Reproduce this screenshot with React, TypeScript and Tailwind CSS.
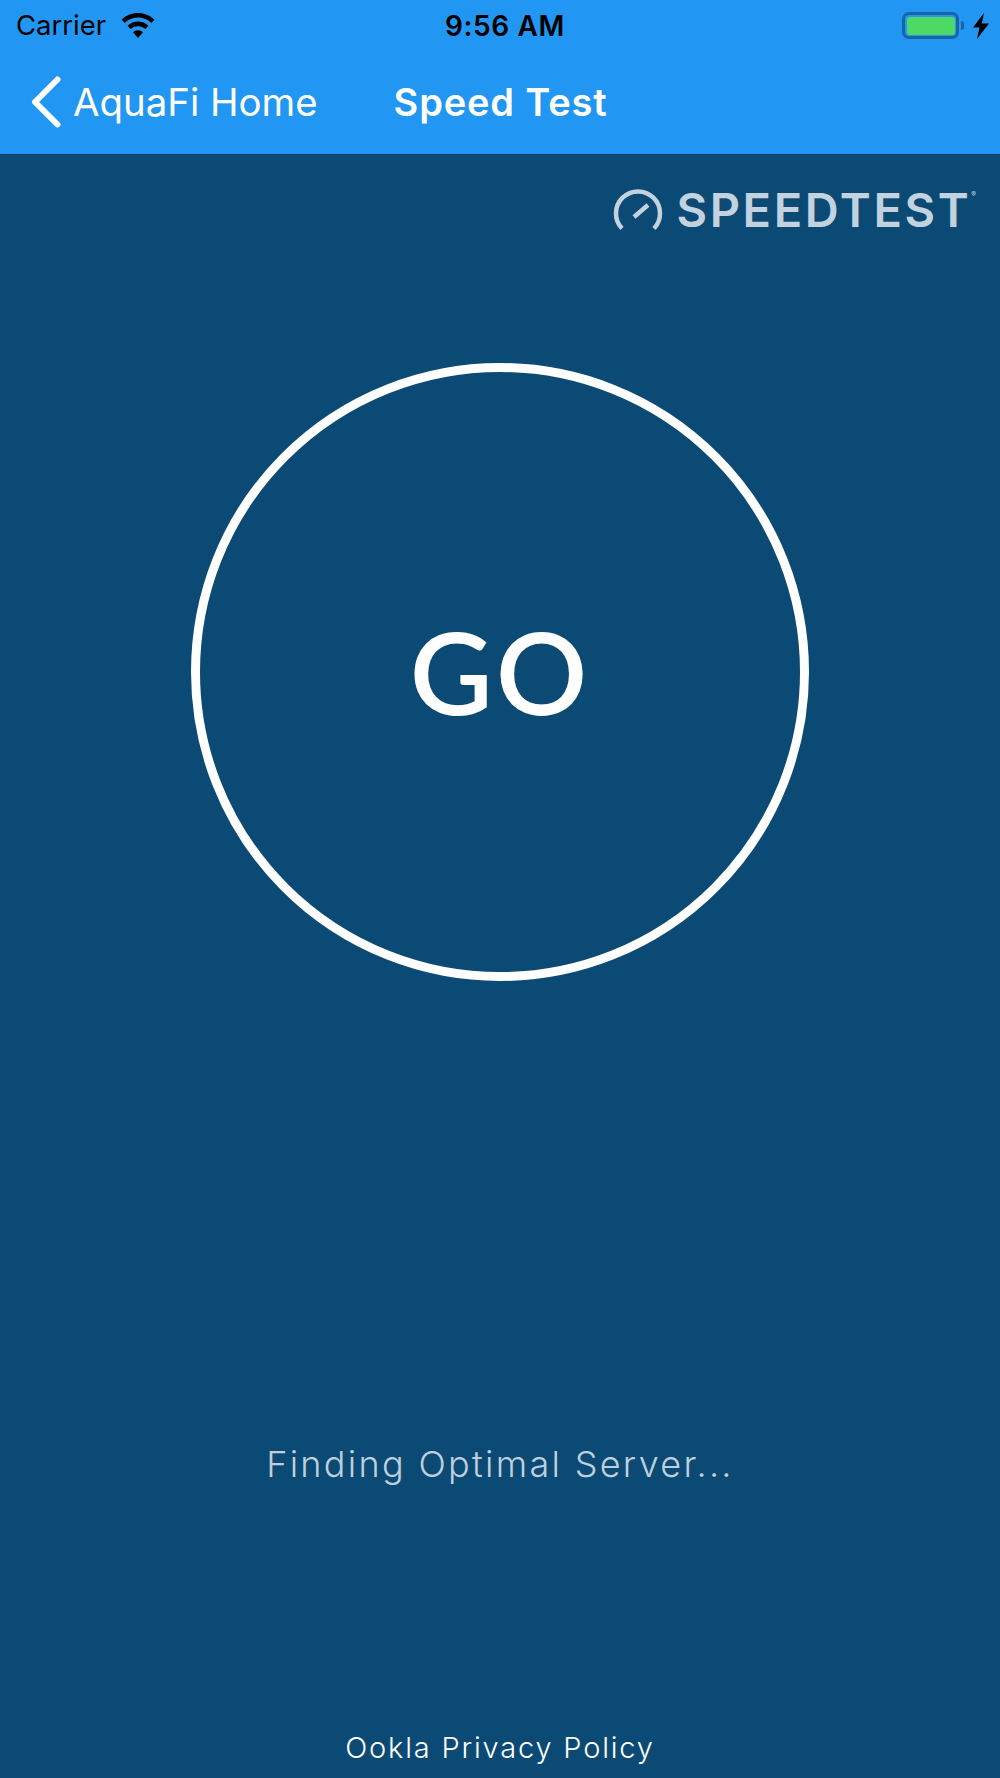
const sysFont = "font-['Inter','Liberation_Sans',sans-serif]";
const brandFont = "font-['Lato','Open_Sans',sans-serif]";

function Wifi() {
  return (
    <svg viewBox="0 0 34 25" className="h-[25px] w-[34px]" fill="currentColor" aria-hidden="true">
      <path d="M17 0C10.6 0 5 2.5 .6 6.6l3 3.4C7.2 6.6 11.8 4.6 17 4.6s9.8 2 13.4 5.4l3-3.4C29 2.5 23.4 0 17 0z" />
      <path d="M17 8.6c-4 0-7.7 1.6-10.4 4.1l3 3.4C11.500 14.300 14.100 13.200 17 13.200s5.500 1.100 7.400 2.900l3-3.400C24.700 10.200 21 8.600 17 8.600z" />
      <path d="M17 17.300c-2 0-3.700.8-5 2l5 5.700 5-5.700c-1.300-1.200-3-2-5-2z" />
    </svg>
  );
}

function Battery() {
  return (
    <div className="flex items-center">
      <div className="flex h-[27px] w-[57px] items-center justify-center rounded-[7px] border-[3px] border-[#1c63a3]">
        <div className="h-[18px] w-[48px] rounded-[3px] bg-[#4cd964]" />
      </div>
      <div className="ml-[2px] h-[9px] w-[3px] rounded-r-sm bg-[#1c63a3]" />
    </div>
  );
}

function Bolt() {
  return (
    <svg viewBox="0 0 16 26" className="h-[26px] w-[16px]" fill="currentColor" aria-hidden="true">
      <path d="M11 0 0 14.500h6.500L4 26 16 10.500H8.800z" />
    </svg>
  );
}

function SpeedLogo() {
  return (
    <svg viewBox="0 0 50 44" className="h-[44px] w-[50px]" fill="none" stroke="#c3d2df" aria-hidden="true">
      <path d="M9 40.500A22 22 0 1 1 41 40.500" strokeWidth="4.500" />
      <path d="M21 29 L35 17" strokeWidth="4.500" />
    </svg>
  );
}

export default function App() {
  return (
    <div className="relative flex h-[1778px] w-[1000px] flex-col overflow-hidden bg-[#0b4a75]">
      <header className="h-[155px] shrink-0 border-b border-[#0a3f66] bg-[#2196f3]">
        <div className={`grid h-[50px] grid-cols-3 items-center pl-[16px] pr-[11px] pt-[1px] text-black ${sysFont}`}>
          <div className="flex items-center gap-[15px]">
            <span className="text-[27.500px] leading-none">Carrier</span>
            <Wifi />
          </div>
          <span className="pl-[5px] text-center text-[28px] font-semibold leading-none tracking-[0.6px]">9:56 AM</span>
          <div className="flex items-center justify-end gap-[9px]">
            <Battery />
            <Bolt />
          </div>
        </div>
        <nav className={`relative flex h-[104px] items-center pl-[31px] text-white ${sysFont}`}>
          <svg viewBox="0 0 30 52" className="h-[52px] w-[30px]" fill="none" stroke="currentColor" strokeWidth="6" strokeLinecap="round" strokeLinejoin="round" aria-hidden="true">
            <path d="M26.500 3.500 4 26l22.500 22.500" />
          </svg>
          <span className="ml-[12px] text-[38.400px] font-normal leading-none">AquaFi Home</span>
          <span className="ml-[76px] text-[38px] font-semibold leading-none tracking-[0.850px]">Speed Test</span>
        </nav>
      </header>

      <main className="relative flex flex-1 flex-col items-center">
        <div className="absolute left-[68px] top-[83px] size-[864px] rounded-full border-2 border-[#0b4b77]" />
        <div className="absolute left-[117px] top-[132px] size-[766px] rounded-full border-2 border-[#0b4b77]" />

        <div className={`flex w-full items-center justify-end pt-[31px] pr-[24px] ${sysFont}`}>
          <SpeedLogo />
          <span className="ml-[14px] text-[47px] font-semibold leading-none tracking-[2.600px] text-[#c3d2df]">SPEEDTEST</span>
          <sup className="mb-[22px] text-[7px] text-[#c3d2df]">®</sup>
        </div>

        <button className={`relative mt-[130px] flex size-[618px] items-center justify-center rounded-full border-[9px] border-white pb-[4px] text-[114px] font-semibold tracking-[3px] text-white ${brandFont}`}>
          GO
        </button>

        <p className={`relative mt-[465px] text-[36px] font-light leading-none tracking-[2.300px] text-[#bfcfdd] ${sysFont}`}>
          Finding Optimal Server...
        </p>

        <a className={`mt-[251px] text-[29px] font-light leading-none tracking-[1.800px] text-white ${sysFont}`}>
          Ookla Privacy Policy
        </a>
      </main>
    </div>
  );
}
